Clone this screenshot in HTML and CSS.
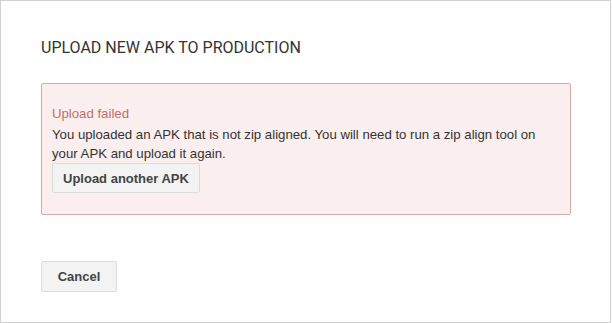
FILE: index.html
```html
<!DOCTYPE html>
<html lang="en">
<head>
    <meta charset="UTF-8">
    <title>Upload new APK to Production</title>
    <link rel="stylesheet" href="styles.css">
</head>

<body>
    <div class="dialog">
        <h1 class="dialog-title">UPLOAD NEW APK TO PRODUCTION</h1>
        <div class="error-box">
            <div class="error-title">Upload failed</div>
            <p class="error-text">You uploaded an APK that is not zip aligned. You will need to run a zip align tool on your APK and upload it again.</p>
            <button class="btn">Upload another APK</button>
        </div>
        <div class="dialog-actions">
            <button class="btn btn-cancel">Cancel</button>
        </div>
    </div>
</body>

</html>
```

FILE: styles.css
```css
body {
    margin: 0;
    background: #fff;
    font-family: 'Liberation Sans', Arial, sans-serif;
    color: #333;
}

.dialog {
    box-sizing: border-box;
    width: 611px;
    height: 323px;
    border: 1px solid #d0d0d0;
    padding: 37px 40px 0 40px;
}

.dialog-title {
    margin: 0;
    font-family: Roboto, sans-serif;
    font-weight: 400;
    font-size: 16px;
    line-height: 20px;
    color: #333;
}

.error-box {
    margin-top: 25px;
    width: 530px;
    box-sizing: border-box;
    height: 132px;
    padding: 20px 10px 0 10px;
    background: #fbeeee;
    border: 1px solid #d9a9a9;
    border-radius: 2px;
}

.error-title {
    font-size: 13.2px;
    line-height: 19px;
    color: #c0706c;
}

.error-text {
    margin: 2px 0 0 0;
    font-size: 13.2px;
    line-height: 19px;
    color: #333;
}

.btn {
    margin-top: 0;
    font-family: 'Liberation Sans', Arial, sans-serif;
    font-weight: bold;
    font-size: 13px;
    color: #444;
    background: #f3f3f3;
    border: 1px solid #dcdcdc;
    border-radius: 2px;
    height: 30px;
    padding: 0 10px;
}

.dialog-actions {
    margin-top: 46px;
}

.btn-cancel {
    width: 76px;
    height: 31px;
}
```
